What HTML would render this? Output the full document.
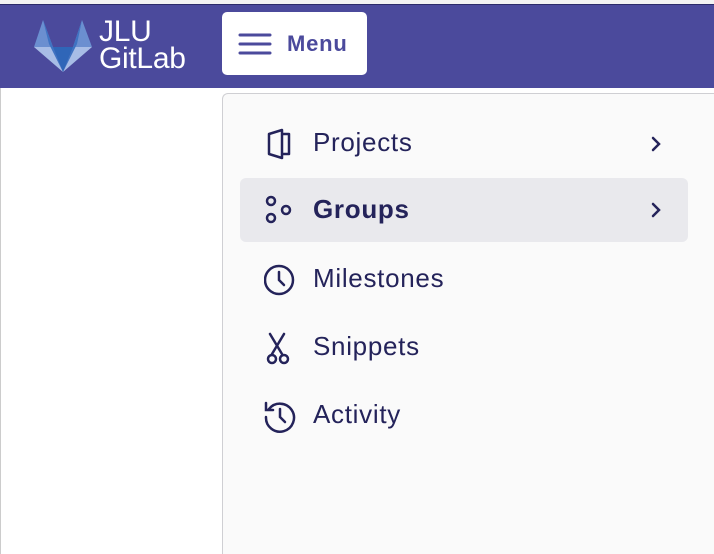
<!DOCTYPE html>
<html><head><style>
html,body{margin:0;width:714px;height:554px;overflow:hidden}
body{background:#fff;font-family:"Liberation Sans",sans-serif;position:relative}
.top{position:absolute;left:0;top:0;width:714px;height:4px;background:#f3f3f3;border-bottom:1px solid #2c2b6a}
.hdr{position:absolute;left:0;top:5px;width:714px;height:83px;background:#4b4a9c}
.logo{position:absolute;left:34px;top:20px}
.lt{position:absolute;left:99px;top:18px;color:#fff;font-size:30px;line-height:27px;letter-spacing:-0.3px}
.btn{position:absolute;left:222px;top:12px;width:145px;height:63px;background:#fff;border-radius:5px}
.btn span{position:absolute;left:65px;top:19px;font-size:22px;font-weight:bold;color:#4b4a9c;letter-spacing:0.8px}
.dd{position:absolute;left:222px;top:93px;width:492px;height:461px;background:#fafafa;border:1px solid #cfcfd3;border-bottom:none;border-right:none;border-radius:6px 0 0 0;box-sizing:border-box}
.it{position:absolute;left:240px;width:448px;height:64px;border-radius:6px;color:#24235a;font-size:26px;letter-spacing:0.7px}
.it .t{position:absolute;left:73px;top:15px}
.it svg.i{position:absolute;left:24px;top:16px}
.ch{position:absolute;left:410px;top:23px}
.sel{background:#e9e9ed}
.leftline{position:absolute;left:0;top:88px;width:1px;height:466px;background:#ccc}
</style></head><body>
<div class="top"></div>
<div class="hdr"></div>
<div class="leftline"></div>
<svg class="logo" width="58" height="54" viewBox="0 0 58 54">
<polygon points="0,27 9,0 19,27" fill="#6b8fd0"/>
<polygon points="39,27 48,0 58,27" fill="#6b8fd0"/>
<polygon points="0,27 19,27 29,52" fill="#a8bde6"/>
<polygon points="58,27 39,27 29,52" fill="#a8bde6"/>
<polygon points="9,0 19,27 29,52 39,27 48,0 43,24 29,52 15,24" fill="#3f73c2"/>
<polygon points="19,27 39,27 29,52" fill="#2f66b8"/>
</svg>
<div class="lt">JLU<br>GitLab</div>
<div class="btn">
<svg style="position:absolute;left:16px;top:21px" width="34" height="22"><g stroke="#4b4a9c" stroke-width="3" stroke-linecap="round"><line x1="2" y1="2" x2="32" y2="2"/><line x1="2" y1="11" x2="32" y2="11"/><line x1="2" y1="20" x2="32" y2="20"/></g></svg>
<span>Menu</span></div>
<div class="dd"></div>

<div class="it" style="top:112px"><svg class="i" width="32" height="32" viewBox="0 0 32 32" fill="none" stroke="#24235a" stroke-width="2.5" stroke-linejoin="round"><path d="M5 6 L18 2 L18 30 L5 26 Z"/><path d="M18 6 H25 V26 H18"/></svg><span class="t">Projects</span><svg class="ch" width="12" height="18"><path d="M3 3 L9 9 L3 15" stroke="#24235a" stroke-width="2.5" fill="none" stroke-linecap="round"/></svg></div>

<div class="it sel" style="top:178px"><svg class="i" width="32" height="32" viewBox="0 0 32 32" fill="none" stroke="#24235a" stroke-width="2.5"><circle cx="7" cy="7" r="4"/><circle cx="7" cy="24" r="4"/><circle cx="22" cy="16" r="4"/></svg><span class="t" style="font-weight:bold;top:16px">Groups</span><svg class="ch" width="12" height="18"><path d="M3 3 L9 9 L3 15" stroke="#24235a" stroke-width="2.5" fill="none" stroke-linecap="round"/></svg></div>

<div class="it" style="top:248px"><svg class="i" width="34" height="34" viewBox="0 0 34 34" fill="none" stroke="#24235a" stroke-width="2.5" stroke-linecap="round"><circle cx="15" cy="16" r="14"/><path d="M15 8 V16 L20 21"/></svg><span class="t">Milestones</span></div>

<div class="it" style="top:316px"><svg class="i" width="32" height="34" viewBox="0 0 32 34" fill="none" stroke="#24235a" stroke-width="2.5" stroke-linecap="round"><path d="M6 2 L18 22 M20 2 L8 22"/><circle cx="8" cy="27" r="4"/><circle cx="20" cy="27" r="4"/></svg><span class="t">Snippets</span></div>

<div class="it" style="top:384px"><svg class="i" width="34" height="34" viewBox="0 0 34 34" fill="none" stroke="#24235a" stroke-width="2.5" stroke-linecap="round"><path d="M5 9 A14 14 0 1 1 2 17"/><path d="M2 3 V10 H9"/><path d="M16 9 V17 L21 22"/></svg><span class="t">Activity</span></div>
</body></html>
